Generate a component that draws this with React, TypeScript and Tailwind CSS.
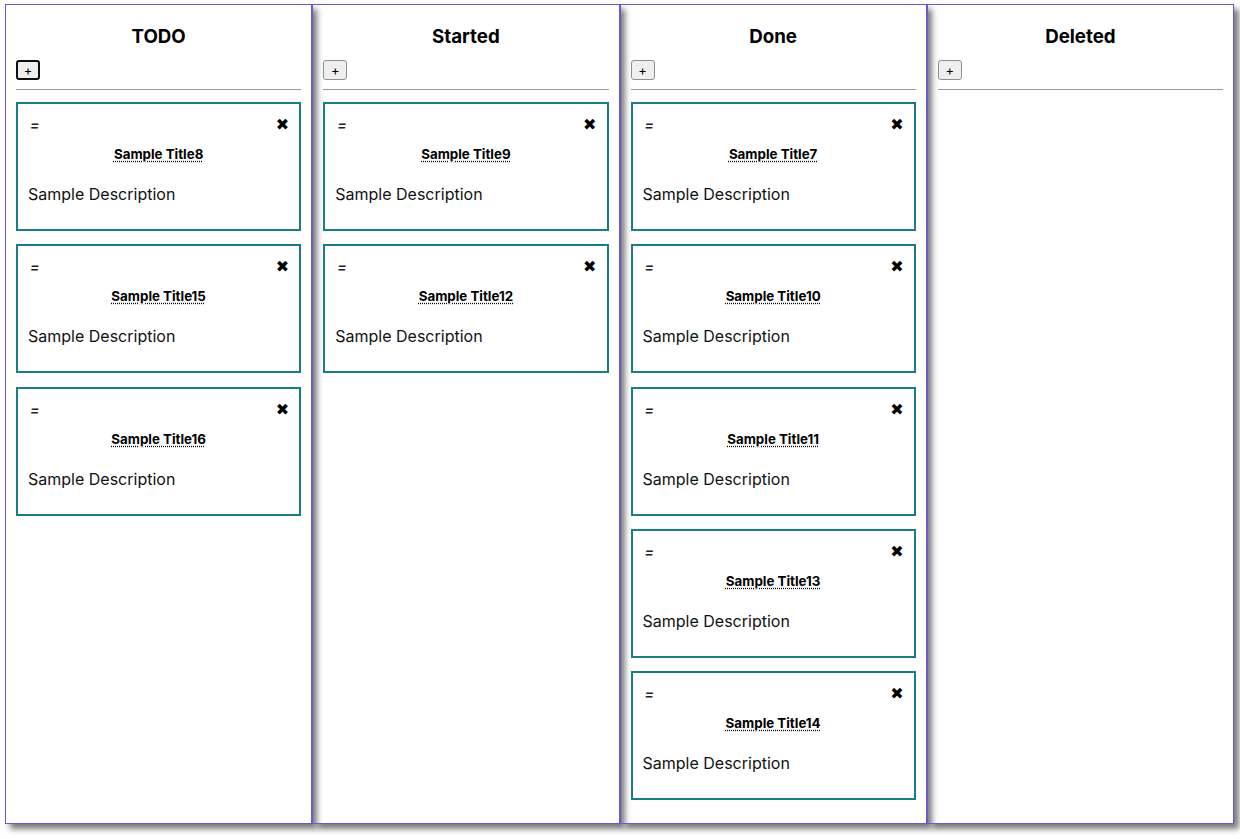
import React from 'react';

type Card = { id: number; title: string; description: string };
type Column = { name: string; cards: Card[] };

const columns: Column[] = [
  {
    name: 'TODO',
    cards: [8, 15, 16].map(n => ({ id: n, title: `Sample Title${n}`, description: 'Sample Description' })),
  },
  {
    name: 'Started',
    cards: [9, 12].map(n => ({ id: n, title: `Sample Title${n}`, description: 'Sample Description' })),
  },
  {
    name: 'Done',
    cards: [7, 10, 11, 13, 14].map(n => ({ id: n, title: `Sample Title${n}`, description: 'Sample Description' })),
  },
  { name: 'Deleted', cards: [] },
];

const TaskCard: React.FC<{ card: Card }> = ({ card }) => (
  <div className="border-2 border-[#1c7c83] p-[10px] bg-white">
    <div className="flex h-5 items-center justify-between pl-[2px] pt-[2px]">
      <i className="text-[14px] leading-none text-[#222] font-semibold italic">=</i>
      <span className="text-[16px] leading-none text-black font-['DejaVu_Sans',sans-serif] cursor-pointer">✖</span>
    </div>
    <div className="mt-[12px] text-center text-[13.33px] leading-4 font-bold">
      <abbr title={card.title} className="underline decoration-dotted underline-offset-2">
        {card.title}
      </abbr>
    </div>
    <p className="mt-[20px] mb-[13px] text-base leading-6 text-[#111]">{card.description}</p>
  </div>
);

const BoardColumn: React.FC<{ column: Column; focused?: boolean }> = ({ column, focused }) => (
  <div className="flex-1 h-[820px] border border-[#6a5acd] shadow-[5px_5px_6px_#7a7a7a] px-[10px] pt-[18px]">
    <h3 className="text-center text-[18.72px] leading-7 font-bold text-black">{column.name}</h3>
    <button
      className={`mt-[9px] flex h-[20px] w-6 items-center justify-center rounded-[3px] bg-[#efefef] text-[13px] leading-none ${
        focused ? 'border-2 border-[#111]' : 'border border-[#8f8f8f]'
      }`}
    >
      +
    </button>
    <hr className="mt-[9px] border-t border-[#9a9a9a]" />
    <div className="mt-[12px] flex flex-col gap-[13.25px]">
      {column.cards.map(card => (
        <TaskCard key={card.id} card={card} />
      ))}
    </div>
  </div>
);

const App: React.FC = () => {
  return (
    <div className="min-h-[839px] bg-white pl-[5px] pr-[6px] pt-[4px] font-['Inter',sans-serif] text-black">
      <div className="flex">
        {columns.map((col, i) => (
          <BoardColumn key={col.name} column={col} focused={i === 0} />
        ))}
      </div>
    </div>
  );
};

export default App;
